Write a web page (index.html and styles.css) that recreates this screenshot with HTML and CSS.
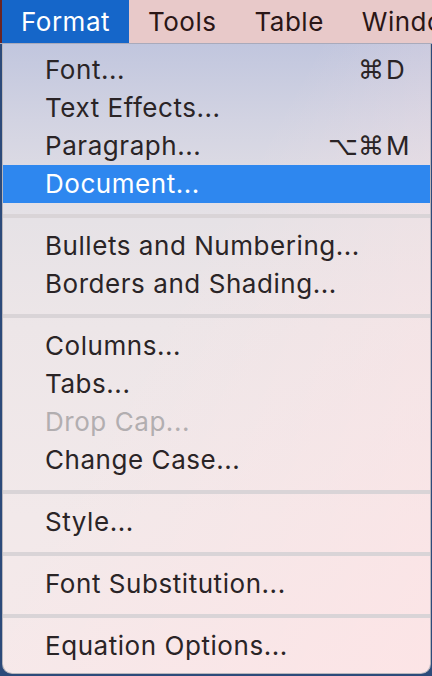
FILE: index.html
```html
<!DOCTYPE html>
<html>
<head>
<meta charset="utf-8">
<link rel="stylesheet" href="styles.css">
</head>
<body>
<div class="menubar">
  <div class="edge"></div>
  <div class="mb-item active">Format</div>
  <div class="mb-item">Tools</div>
  <div class="mb-item">Table</div>
  <div class="mb-item">Window</div>
</div>
<div class="menu">
  <div class="item"><span class="label">Font...</span><span class="sc"><span class="mods">⌘</span><span class="key">D</span></span></div>
  <div class="item"><span class="label">Text Effects...</span></div>
  <div class="item"><span class="label">Paragraph...</span><span class="sc"><span class="mods">⌥⌘</span><span class="key">M</span></span></div>
  <div class="item selected"><span class="label">Document...</span></div>
  <div class="sep"></div>
  <div class="item"><span class="label">Bullets and Numbering...</span></div>
  <div class="item"><span class="label">Borders and Shading...</span></div>
  <div class="sep"></div>
  <div class="item"><span class="label">Columns...</span></div>
  <div class="item"><span class="label">Tabs...</span></div>
  <div class="item disabled"><span class="label">Drop Cap...</span></div>
  <div class="item"><span class="label">Change Case...</span></div>
  <div class="sep"></div>
  <div class="item"><span class="label">Style...</span></div>
  <div class="sep"></div>
  <div class="item"><span class="label">Font Substitution...</span></div>
  <div class="sep"></div>
  <div class="item"><span class="label">Equation Options...</span></div>
</div>
</body>
</html>
```

FILE: styles.css
```css
html, body {
  margin: 0;
  padding: 0;
}
body {
  width: 432px;
  height: 676px;
  overflow: hidden;
  background: linear-gradient(180deg, #6a2a2a 0px, #6a2a2a 44px, #2c4a7a 44px, #2c4a7a 100%);
  font-family: Inter, "Noto Sans", "DejaVu Sans", sans-serif;
  color: #2a2426;
}
.menubar {
  display: flex;
  height: 43px;
  background: #e8c9c9;
  border-bottom: 1px solid #a9aabb;
  overflow: hidden;
  white-space: nowrap;
}
.edge {
  width: 2px;
  flex: none;
  background: #6a2424;
}
.mb-item {
  flex: none;
  font-size: 26px;
  letter-spacing: 0.5px;
  line-height: 43px;
  padding: 0 19px;
  color: #2a1616;
}
.mb-item.active {
  background: #1566c9;
  color: #fff;
}
.menu {
  margin: 0 1px 0 2px;
  padding: 7px 0 8px;
  border: 1px solid #b8b6bc;
  border-top: none;
  border-radius: 0 0 10px 10px;
  background:
    linear-gradient(120deg, rgba(255,232,232,0) 40%, rgba(255,226,228,0.7) 100%),
    linear-gradient(180deg, #c1c6de 0%, #d2d3e2 12%, #e6e2e6 28%, #ede6e8 45%, #f2e9ea 75%, #f6e9ea 100%);
}
.item {
  display: flex;
  align-items: center;
  height: 38px;
  padding: 0 20px 0 42px;
  font-size: 26px;
  letter-spacing: 0.55px;
  line-height: 38px;
  white-space: nowrap;
}
.item .label {
  flex: 1;
}
.item.selected {
  background: #2e87ef;
  color: #fff;
}
.item.disabled {
  color: #b2aeb0;
}
.sc {
  display: flex;
  letter-spacing: 0;
  font-family: "DejaVu Sans", sans-serif;
}
.mods {
  text-align: right;
}
.key {
  width: 24px;
  padding-left: 2px;
  font-family: Inter, "Noto Sans", sans-serif;
}
.sep {
  height: 4px;
  margin: 11px 0 9px;
  background: #d9d4d7;
}
```
